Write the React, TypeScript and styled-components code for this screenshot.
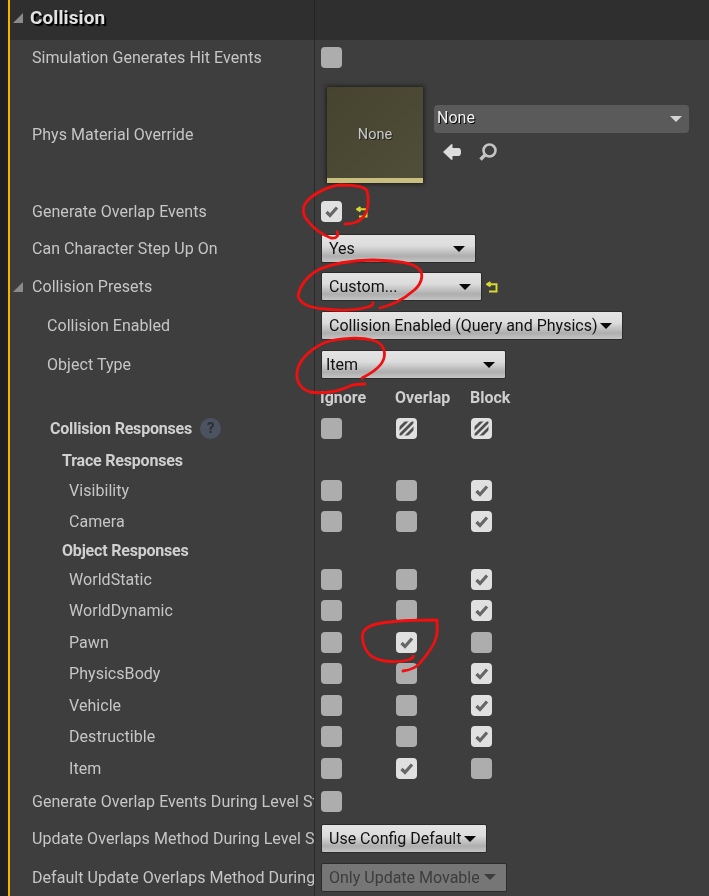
import styled, { createGlobalStyle } from "styled-components";

const GlobalStyle = createGlobalStyle`
  html, body {
    margin: 0;
    padding: 0;
    background: #3e3e3e;
  }
`;

const Page = styled.div`
  position: relative;
  display: flex;
  width: 709px;
  height: 896px;
  overflow: hidden;
  background: #3e3e3e;
  font-family: Roboto, "Liberation Sans", sans-serif;
  filter: blur(0.35px);
`;

const SideStrip = styled.div`
  width: 8px;
  flex: none;
  background: #1f1f1f;
`;

const Rail = styled.div`
  width: 2px;
  flex: none;
  background: #f2b200;
`;

const Panel = styled.div`
  flex: 1;
  min-width: 0;
`;

const Header = styled.div`
  display: flex;
  height: 40px;
  background: #2f2f2f;
`;

const HeaderName = styled.div`
  display: flex;
  align-items: center;
  gap: 7px;
  width: 301px;
  padding: 0 0 5px 3px;
  border-right: 1px solid #232323;
  color: #e2e2e2;
  font-size: 19px;
  font-weight: 700;
  letter-spacing: 0.1px;
  text-shadow: 1px 1px 0 #000, 2px 2px 1px #000;
`;

const Row = styled.div<{ $h: number }>`
  display: flex;
  height: ${(p) => p.$h}px;
`;

const Name = styled.div<{ $indent?: number; $bold?: boolean }>`
  display: flex;
  align-items: center;
  flex: none;
  width: ${(p) => 304 - (p.$indent ?? 22)}px;
  padding-left: ${(p) => p.$indent ?? 22}px;
  border-right: 1px solid #2a2a2a;
  overflow: hidden;
  white-space: nowrap;
  color: ${(p) => (p.$bold ? "#d0d0d0" : "#c6c6c6")};
  font-size: 16px;
  font-weight: ${(p) => (p.$bold ? 700 : 400)};
  letter-spacing: ${(p) => (p.$bold ? "-0.2px" : "0.05px")};
`;

const Value = styled.div`
  display: flex;
  align-items: center;
  flex: 1;
  min-width: 0;
  padding-left: 6px;
`;

const Caret = styled.svg`
  flex: none;
  width: 10px;
  height: 10px;
  margin-right: 9px;
`;

const Box = styled.div<{ $on?: boolean }>`
  display: flex;
  flex: none;
  width: 21px;
  height: 21px;
  border-radius: 4px;
  background: ${(p) => (p.$on ? "#e0e0e0" : "#adadad")};
`;

const Cols = styled.div`
  display: grid;
  grid-template-columns: repeat(3, 75px);
`;

const ColTitle = styled.div`
  margin-left: -1px;
  color: #cfcfcf;
  font-size: 16px;
  font-weight: 700;
`;

const Drop = styled.div<{ $w: number; $pad?: number; $off?: boolean }>`
  display: flex;
  align-items: center;
  justify-content: space-between;
  box-sizing: border-box;
  width: ${(p) => p.$w}px;
  height: 29px;
  padding: 0 10px 0 ${(p) => p.$pad ?? 7}px;
  border: 1px solid #2b2b2b;
  border-radius: 2px;
  background: ${(p) =>
    p.$off
      ? "#767676"
      : "linear-gradient(#e4e4e4 0%, #dcdcdc 40%, #aeaeae 78%, #c4c4c4 100%)"};
  color: ${(p) => (p.$off ? "#3c3c3c" : "#111")};
  font-size: 16px;
  white-space: nowrap;
`;

const DropArrow = styled.div<{ $off?: boolean }>`
  flex: none;
  width: 0;
  height: 0;
  border-left: 6px solid transparent;
  border-right: 6px solid transparent;
  border-top: 6px solid ${(p) => (p.$off ? "#3c3c3c" : "#0a0a0a")};
`;

const ResetIcon = styled.svg<{ $gap: number }>`
  flex: none;
  width: 12px;
  height: 12px;
  margin-left: ${(p) => p.$gap}px;
`;

const AssetRow = styled.div`
  display: flex;
  align-items: flex-start;
  padding: 2px 0 0 6px;
`;

const Thumb = styled.div`
  display: flex;
  flex-direction: column;
  width: 96px;
  height: 96px;
  flex: none;
  background: linear-gradient(135deg, #46442f, #504e38);
  box-shadow: 0 0 4px 1px #1c1c1c;
`;

const ThumbLabel = styled.div`
  display: flex;
  flex: 1;
  align-items: center;
  justify-content: center;
  padding-top: 3px;
  color: #c9c9c9;
  font-size: 14.5px;
  text-shadow: 1px 1px 0 #222;
`;

const ThumbFoot = styled.div`
  height: 5px;
  background: #c8bf7f;
`;

const AssetSide = styled.div`
  width: 255px;
  margin: 18px 0 0 11px;
`;

const Combo = styled.div`
  display: flex;
  align-items: center;
  justify-content: space-between;
  box-sizing: border-box;
  height: 28px;
  padding: 0 7px 3px 3px;
  border-radius: 4px;
  background: #5a5a5a;
  color: #f2f2f2;
  font-size: 16px;
  text-shadow: 1px 1px 0 #000;
`;

const ComboArrow = styled.div`
  width: 0;
  height: 0;
  margin-top: 3px;
  border-left: 6px solid transparent;
  border-right: 6px solid transparent;
  border-top: 6px solid #d4d4d4;
`;

const AssetTools = styled.div`
  display: flex;
  gap: 18px;
  margin: 10px 0 0 9px;
`;

const HelpBadge = styled.div`
  display: flex;
  align-items: center;
  justify-content: center;
  width: 21px;
  height: 21px;
  margin-left: 8px;
  border-radius: 50%;
  background: #4b5260;
  color: #2b2d33;
  font-size: 15px;
  font-weight: 700;
`;

const Scribbles = styled.svg`
  position: absolute;
  left: 0;
  top: 0;
  pointer-events: none;
`;

const Check = () => (
  <svg width="21" height="21" viewBox="0 0 21 21">
    <path d="M5.5 11 L9 14.5 L16 6.5" fill="none" stroke="#666" strokeWidth="3.2" />
  </svg>
);

const Stripes = () => (
  <svg width="21" height="21" viewBox="0 0 21 21">
    <defs>
      <clipPath id="inner">
        <rect x="3.5" y="3.5" width="14" height="14" />
      </clipPath>
    </defs>
    <g clipPath="url(#inner)" stroke="#4f4f4f" strokeWidth="2.8">
      <path d="M0 14 L14 0 M0 21 L21 0 M7 21 L21 7" />
    </g>
  </svg>
);

type Tick = "off" | "on" | "mixed";

const CheckBox = ({ state = "off" }: { state?: Tick }) => (
  <Box $on={state !== "off"}>
    {state === "on" && <Check />}
    {state === "mixed" && <Stripes />}
  </Box>
);

const Reset = ({ gap = 4 }: { gap?: number }) => (
  <ResetIcon $gap={gap} viewBox="0 0 12 12">
    <path
      d="M4.5 1 L1 3.2 L4.5 5.4 M1.5 3.2 H10.5 V10.5 H3"
      fill="none"
      stroke="#d8d82e"
      strokeWidth="2"
    />
  </ResetIcon>
);

const Dropdown = ({
  label,
  w,
  pad,
  off,
}: {
  label: string;
  w: number;
  pad?: number;
  off?: boolean;
}) => (
  <Drop $w={w} $pad={pad} $off={off}>
    {label}
    <DropArrow $off={off} />
  </Drop>
);

const traceRows: { name: string; h: number; ticks: Tick[] }[] = [
  { name: "Visibility", h: 32, ticks: ["off", "off", "on"] },
  { name: "Camera", h: 31, ticks: ["off", "off", "on"] },
];

const objectRows: { name: string; h: number; ticks: Tick[] }[] = [
  { name: "WorldStatic", h: 31, ticks: ["off", "off", "on"] },
  { name: "WorldDynamic", h: 31, ticks: ["off", "off", "on"] },
  { name: "Pawn", h: 32, ticks: ["off", "on", "off"] },
  { name: "PhysicsBody", h: 31, ticks: ["off", "off", "on"] },
  { name: "Vehicle", h: 32, ticks: ["off", "off", "on"] },
  { name: "Destructible", h: 31, ticks: ["off", "off", "on"] },
  { name: "Item", h: 32, ticks: ["off", "on", "off"] },
];

const ResponseRow = ({ name, h, ticks }: { name: string; h: number; ticks: Tick[] }) => (
  <Row $h={h}>
    <Name $indent={59}>{name}</Name>
    <Value>
      <Cols>
        {ticks.map((t, i) => (
          <CheckBox key={i} state={t} />
        ))}
      </Cols>
    </Value>
  </Row>
);

const App = () => (
  <Page>
    <GlobalStyle />
    <SideStrip />
    <Rail />
    <Panel>
      <Header>
        <HeaderName>
          <svg width="10" height="10" viewBox="0 0 10 10">
            <path d="M10 0 V10 H0 Z" fill="#8a8a8a" />
          </svg>
          Collision
        </HeaderName>
      </Header>

      <Row $h={35}>
        <Name>Simulation Generates Hit Events</Name>
        <Value>
          <CheckBox />
        </Value>
      </Row>

      <Row $h={118}>
        <Name>Phys Material Override</Name>
        <Value>
          <AssetRow>
            <Thumb>
              <ThumbLabel>None</ThumbLabel>
              <ThumbFoot />
            </Thumb>
            <AssetSide>
              <Combo>
                None
                <ComboArrow />
              </Combo>
              <AssetTools>
                <svg width="18" height="18" viewBox="0 0 18 18">
                  <path
                    d="M0 9 L8.5 1 L9.5 1.5 V5 H15.5 C17.5 5 18 7 18 9 C18 11 17.5 13 15.5 13 H9.5 V16.5 L8.5 17 Z"
                    fill="#dcdcdc"
                  />
                </svg>
                <svg width="18" height="18" viewBox="0 0 18 18">
                  <circle cx="10.5" cy="7.5" r="6" fill="none" stroke="#c4c4c4" strokeWidth="2.6" />
                  <path d="M6.5 11.5 L1.5 16.5" stroke="#c4c4c4" strokeWidth="3.4" />
                </svg>
              </AssetTools>
            </AssetSide>
          </AssetRow>
        </Value>
      </Row>

      <Row $h={37}>
        <Name>Generate Overlap Events</Name>
        <Value>
          <CheckBox state="on" />
          <Reset gap={14} />
        </Value>
      </Row>

      <Row $h={37}>
        <Name>Can Character Step Up On</Name>
        <Value>
          <Dropdown label="Yes" w={155} />
        </Value>
      </Row>

      <Row $h={39}>
        <Name $indent={3}>
          <Caret viewBox="0 0 10 10">
            <path d="M10 0 V10 H0 Z" fill="#8a8a8a" />
          </Caret>
          Collision Presets
        </Name>
        <Value>
          <Dropdown label="Custom..." w={161} />
          <Reset />
        </Value>
      </Row>

      <Row $h={39}>
        <Name $indent={37}>Collision Enabled</Name>
        <Value>
          <Dropdown label="Collision Enabled (Query and Physics)" w={302} />
        </Value>
      </Row>

      <Row $h={39}>
        <Name $indent={37}>Object Type</Name>
        <Value>
          <Dropdown label="Item" w={185} pad={4} />
        </Value>
      </Row>

      <Row $h={26}>
        <Name />
        <Value>
          <Cols>
            <ColTitle>Ignore</ColTitle>
            <ColTitle>Overlap</ColTitle>
            <ColTitle>Block</ColTitle>
          </Cols>
        </Value>
      </Row>

      <Row $h={36}>
        <Name $indent={40} $bold>
          Collision Responses
          <HelpBadge>?</HelpBadge>
        </Name>
        <Value>
          <Cols>
            <CheckBox />
            <CheckBox state="mixed" />
            <CheckBox state="mixed" />
          </Cols>
        </Value>
      </Row>

      <Row $h={28}>
        <Name $indent={52} $bold>
          Trace Responses
        </Name>
      </Row>

      {traceRows.map((r) => (
        <ResponseRow key={r.name} {...r} />
      ))}

      <Row $h={27}>
        <Name $indent={52} $bold>
          Object Responses
        </Name>
      </Row>

      {objectRows.map((r) => (
        <ResponseRow key={r.name} {...r} />
      ))}

      <Row $h={35}>
        <Name>Generate Overlap Events During Level Streaming</Name>
        <Value>
          <CheckBox />
        </Value>
      </Row>

      <Row $h={39}>
        <Name>Update Overlaps Method During Level Streaming</Name>
        <Value>
          <Dropdown label="Use Config Default" w={166} />
        </Value>
      </Row>

      <Row $h={38}>
        <Name>Default Update Overlaps Method During Level Streaming</Name>
        <Value>
          <Dropdown label="Only Update Movable" w={186} off />
        </Value>
      </Row>
    </Panel>

    <Scribbles width="709" height="896" viewBox="0 0 709 896" fill="none" stroke="#f01010" strokeWidth="2.8" strokeLinecap="round" strokeLinejoin="round">
      <path d="M345 224 C352 224 360 222 364 216 C369 209 369 198 367 191 C365 186 352 185 340 185 C328 186 314 194 308 200 C302 206 302 214 307 220 C313 228 323 235 331 238 C337 239 339 235 337 232" />
      <path d="M380 308 C392 305 404 299 413 291 C421 285 424 276 420 270 C414 262 396 261 373 260 C352 260 330 264 318 270 C306 277 300 286 298 296 C300 304 310 308 325 309 C340 311 358 310 368 307 C372 306 373 304 373 303" />
      <path d="M362 378 C372 373 382 366 384 358 C386 350 382 342 372 340 C360 337 340 338 326 342 C312 348 301 358 298 368 C295 378 298 388 310 392 C322 394 338 392 350 386 C354 384 360 384 365 384" />
      <path d="M403 671 C410 670 416 668 420 663 C426 656 434 646 436 638 C438 632 437 626 437 620 C425 620 405 620 390 622 C378 623 367 626 364 631 C360 637 364 649 370 655 C378 662 395 663 408 660 C412 659 414 657 413 656" />
    </Scribbles>
  </Page>
);

export default App;
